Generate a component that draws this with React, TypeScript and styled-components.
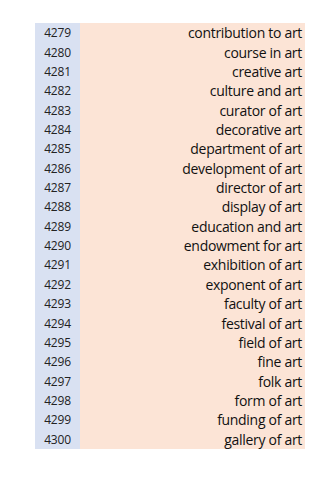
import { createGlobalStyle } from "styled-components";
import styled from "styled-components";
import { Fragment } from "react";

const GlobalStyle = createGlobalStyle`
  body {
    margin: 0;
    background: #ffffff;
    font-family: "Open Sans", "Noto Sans", sans-serif;
  }
`;

const Page = styled.div`
  padding: 23px 26px 0 35px;
`;

const Table = styled.div`
  display: grid;
  grid-template-columns: 45px 225px;
  grid-auto-rows: 19.37px;
`;

const NumCell = styled.div`
  background: #d9e1f2;
  color: #222;
  font-size: 12px;
  letter-spacing: -0.2px;
  display: flex;
  align-items: center;
  justify-content: center;
`;

const TextCell = styled.div`
  background: #fce4d6;
  color: #111;
  font-size: 14px;
  letter-spacing: -0.3px;
  display: flex;
  align-items: center;
  justify-content: flex-end;
  padding-right: 3px;
  white-space: nowrap;
`;

const ROWS = [
  "contribution to art",
  "course in art",
  "creative art",
  "culture and art",
  "curator of art",
  "decorative art",
  "department of art",
  "development of art",
  "director of art",
  "display of art",
  "education and art",
  "endowment for art",
  "exhibition of art",
  "exponent of art",
  "faculty of art",
  "festival of art",
  "field of art",
  "fine art",
  "folk art",
  "form of art",
  "funding of art",
  "gallery of art",
];

const App: React.FC = () => {
  return (
    <>
      <GlobalStyle />
      <Page>
        <Table>
          {ROWS.map((label, i) => (
            <Fragment key={label}>
              <NumCell>{4279 + i}</NumCell>
              <TextCell>{label}</TextCell>
            </Fragment>
          ))}
        </Table>
      </Page>
    </>
  );
};

export default App;
